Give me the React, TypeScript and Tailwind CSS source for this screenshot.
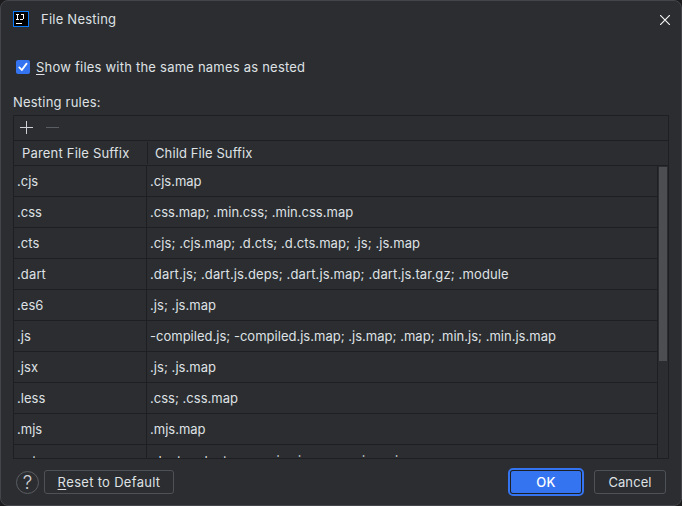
const rules: { parent: string; child: string; tracking: string }[] = [
  { parent: ".cjs", child: ".cjs.map", tracking: "tracking-[0px]" },
  { parent: ".css", child: ".css.map; .min.css; .min.css.map", tracking: "tracking-[0.02px]" },
  { parent: ".cts", child: ".cjs; .cjs.map; .d.cts; .d.cts.map; .js; .js.map", tracking: "tracking-[0.07px]" },
  { parent: ".dart", child: ".dart.js; .dart.js.deps; .dart.js.map; .dart.js.tar.gz; .module", tracking: "tracking-[0.125px]" },
  { parent: ".es6", child: ".js; .js.map", tracking: "tracking-[0.05px]" },
  { parent: ".js", child: "-compiled.js; -compiled.js.map; .js.map; .map; .min.js; .min.js.map", tracking: "tracking-[0.015px]" },
  { parent: ".jsx", child: ".js; .js.map", tracking: "tracking-[0.05px]" },
  { parent: ".less", child: ".css; .css.map", tracking: "tracking-[0.02px]" },
  { parent: ".mjs", child: ".mjs.map", tracking: "tracking-[0px]" },
  { parent: ".mts", child: ".d.mts; .d.mts.map; .js; .js.map; .mjs; .mjs.map", tracking: "tracking-[0.07px]" },
];

function TitleBar() {
  return (
    <header className="flex h-[38px] shrink-0 items-start pl-3 pr-[11px]">
      <svg className="mt-[10px]" width="16" height="16" viewBox="0 0 16 16" shapeRendering="crispEdges">
        <rect width="16" height="16" fill="#087cfa" />
        <rect x="1" y="1" width="14" height="14" fill="#000" />
        <path
          d="M3 3h3v1H5v4h1v1H3V8h1V4H3zM8 3h3v5h-1v1H7V8h3V4H8zM3 12h6v1H3z"
          fill="#fff"
        />
      </svg>
      <h1 className="ml-3 mt-[10px] grow tracking-[0.23px]">File Nesting</h1>
      <svg className="mt-[14px]" width="10" height="10" viewBox="0 0 10 10" fill="none" stroke="#f2f2f2" strokeWidth="1.2">
        <path d="M0 0 10 10M10 0 0 10" />
      </svg>
    </header>
  );
}

function RulesTable() {
  return (
    <section className="flex h-[344px] w-[656px] shrink-0 flex-col border border-[#1e1f22]">
      <div className="flex h-[25px] shrink-0 items-start gap-[13px] border-b border-[#1e1f22] pl-[6px] pt-[5px]">
        <svg width="13" height="13" viewBox="0 0 13 13" fill="none" stroke="#ced0d6" shapeRendering="crispEdges">
          <path d="M6.5 0v13M0 6.5h13" />
        </svg>
        <svg width="13" height="13" viewBox="0 0 13 13" fill="none" stroke="#5a5d63" shapeRendering="crispEdges">
          <path d="M0 6.5h13" />
        </svg>
      </div>
      <div className="flex h-[25px] shrink-0 items-stretch border-b border-[#1e1f22] tracking-[0.19px]">
        <div className="my-px flex w-[134px] items-center border-r border-[#1e1f22] pl-2">Parent File Suffix</div>
        <div className="flex items-center pl-[7px] tracking-[0.1px]">Child File Suffix</div>
      </div>
      <div className="flex min-h-0 grow">
        <div className="w-[644px] overflow-hidden border-r border-[#1e1f22]">
          {rules.map((rule) => (
            <div key={rule.parent} className={`group flex h-[31px] border-b border-[#1e1f22] ${rule.tracking}`}>
              <div className="flex w-[133px] items-center border-r border-[#1e1f22] pl-[3px] group-last:pt-[2px]">{rule.parent}</div>
              <div className="flex items-center pl-[3px] group-last:pt-[2px]">{rule.child}</div>
            </div>
          ))}
        </div>
        <div className="ml-px mt-px h-[194px] w-2 bg-[#4d4e51]" />
      </div>
    </section>
  );
}

export default function App() {
  return (
    <div className="h-[506px] w-[682px] overflow-hidden bg-[#1c1c1e]">
      <main className="flex h-full w-full cursor-default flex-col overflow-hidden whitespace-pre rounded-lg border border-[#43454a] bg-[#2b2d30] font-['Inter',sans-serif] text-[13px] leading-4 tracking-[0.3px] text-[#dfe1e5]">
        <TitleBar />
        <div className="flex grow flex-col pl-3">
          <label className="mt-5 flex h-4 items-center pl-[3px]">
            <span className="flex size-[14px] items-center justify-center rounded-[2px] bg-[#3574f0]">
              <svg width="10" height="10" viewBox="0 0 10 10" fill="none" stroke="#fff" strokeWidth="1.8" strokeLinecap="round" strokeLinejoin="round">
                <path d="M1.3 5.4 3.8 8 8.6 1.6" />
              </svg>
            </span>
            <span className="ml-[6px] tracking-[0.22px]">
              <span className="underline underline-offset-2">S</span>how files with the same names as nested
            </span>
          </label>
          <p className="mb-[5px] mt-[19px] h-4 tracking-[0.2px]">Nesting rules:</p>
          <RulesTable />
          <footer className="mt-[9px] flex items-center pl-[3px]">
            <button className="flex size-[23px] items-center justify-center rounded-full border border-[#5a5d63] pt-[2px] text-[19px] font-light leading-4 tracking-normal text-[#ced0d6]">
              ?
            </button>
            <button className="ml-[5px] flex h-6 w-[130px] items-center justify-center rounded-[3px] border border-[#4e5157]">
              <span className="underline underline-offset-2">R</span>eset to Default
            </button>
            <button className="ml-[334px] flex h-7 w-[76px] items-center justify-center rounded-[5px] border-2 border-[#3574f0] bg-[#1e1f22] p-px font-medium text-white">
              <span className="flex h-full w-full items-center justify-center rounded-[2px] bg-[#3574f0]">OK</span>
            </button>
            <button className="ml-[10px] flex h-6 w-[72px] items-center justify-center rounded-[3px] border border-[#4e5157] tracking-[0.1px]">
              Cancel
            </button>
          </footer>
        </div>
      </main>
    </div>
  );
}
